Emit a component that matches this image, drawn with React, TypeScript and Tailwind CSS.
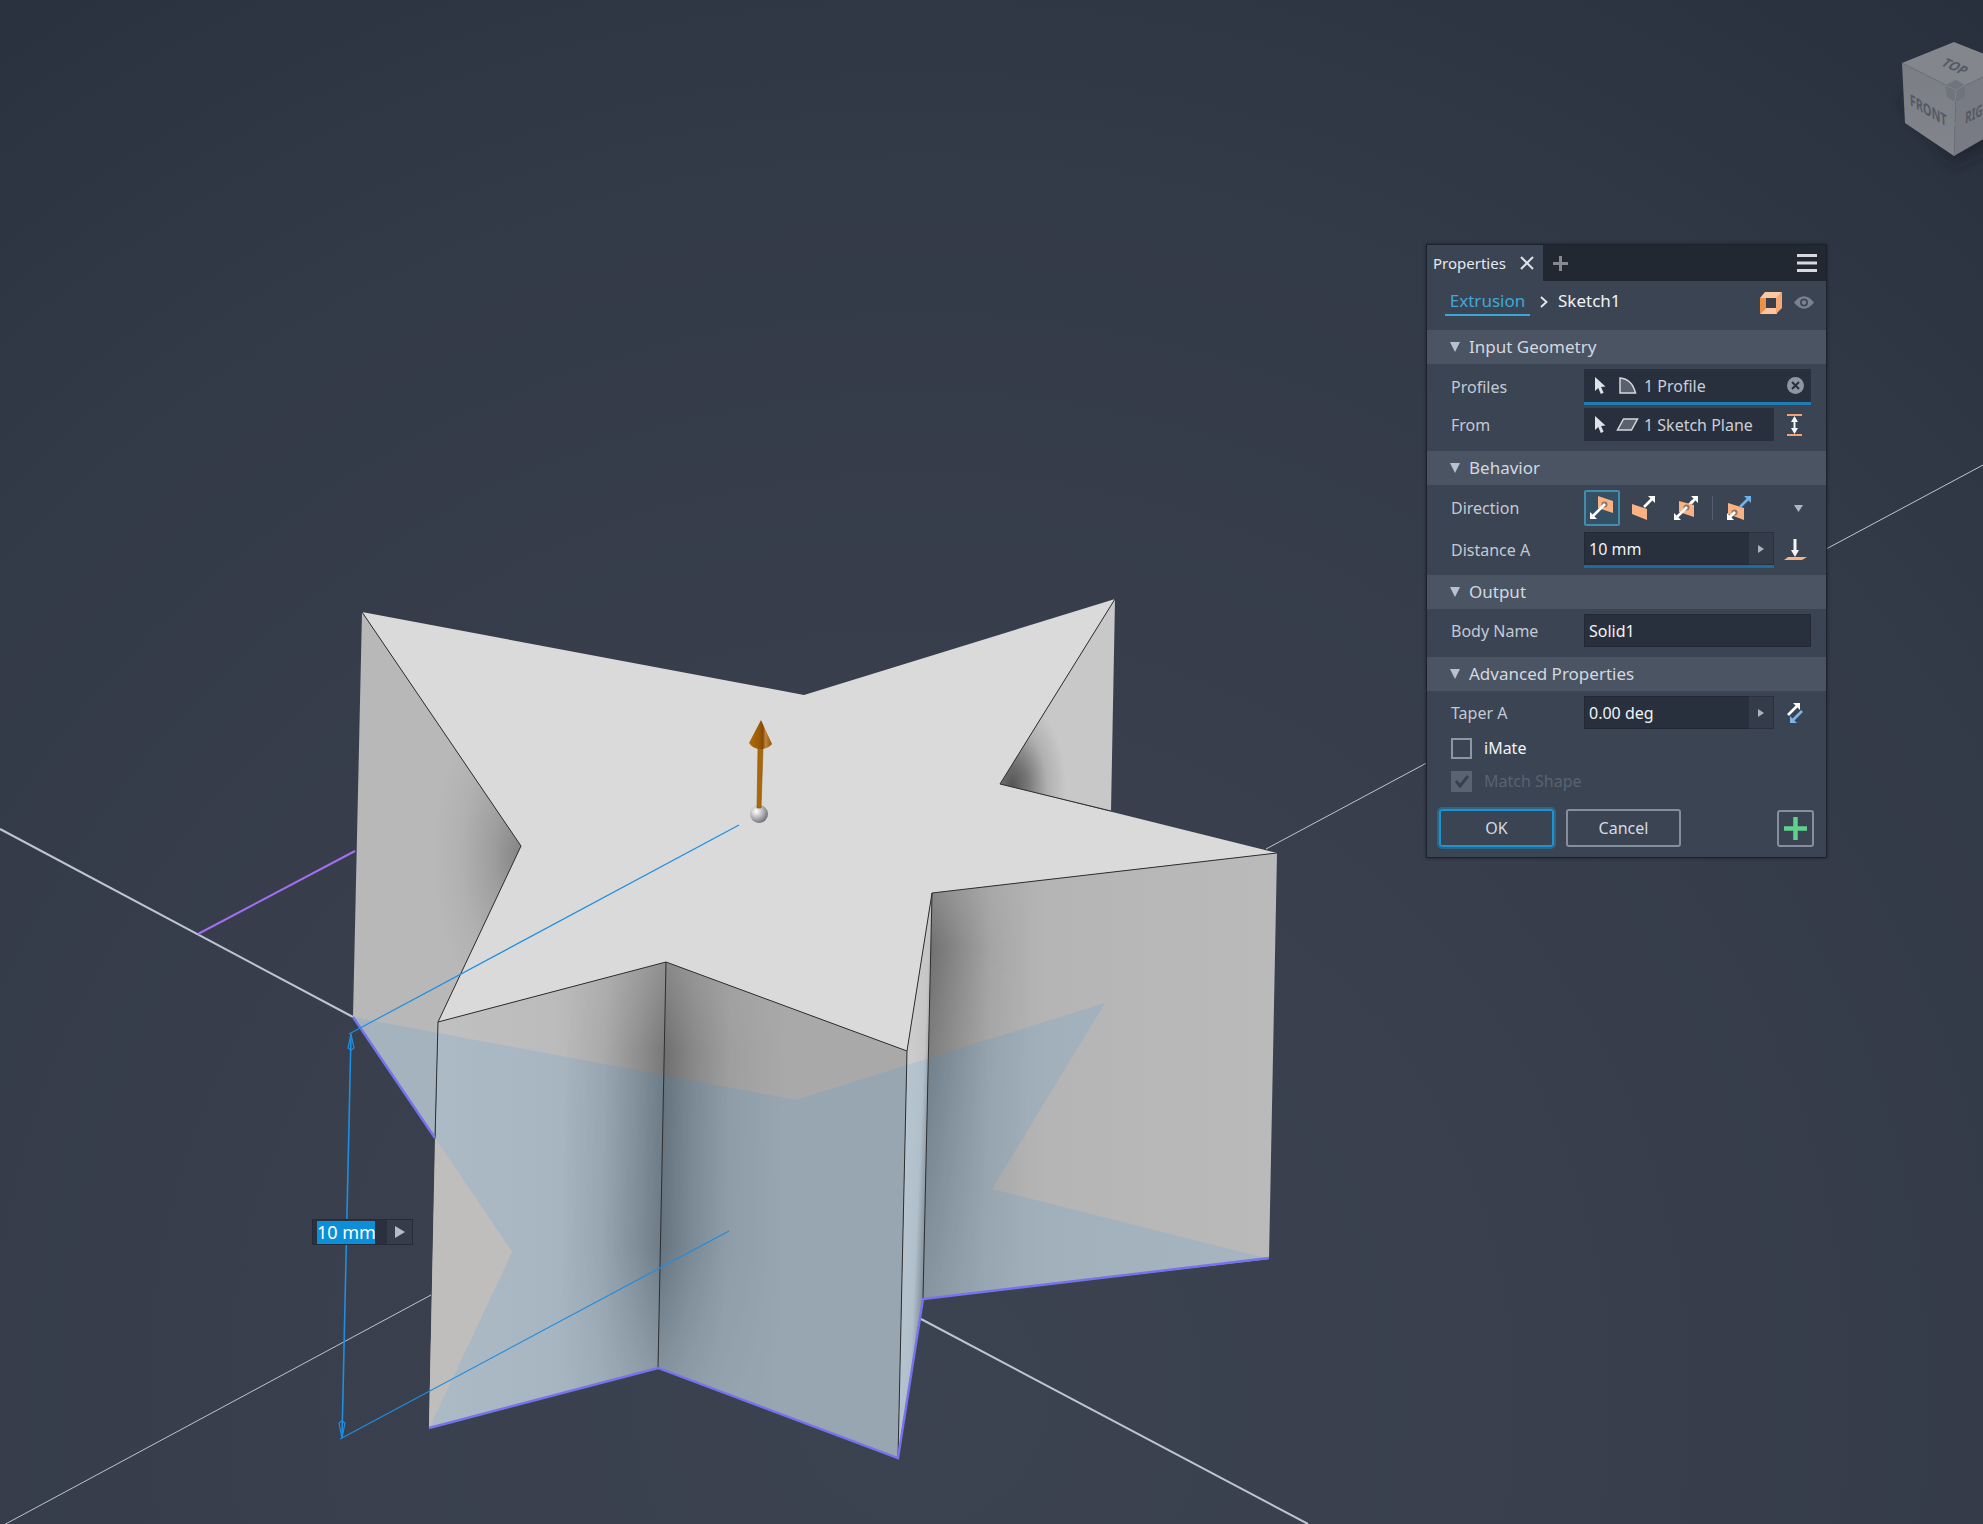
import React, { useState } from "react";

const cursorPath = "M1 0 L1 14 L4.3 11 L6.8 17 L9.6 15.8 L7.1 10 L11.5 9.6 Z";

function Scene() {
  return (
    <svg
      className="absolute inset-0 h-full w-full"
      viewBox="0 0 1983 1524"
      preserveAspectRatio="xMinYMin slice"
      aria-label="Extruded star preview"
    >
      <defs>
        <radialGradient id="bg" gradientUnits="userSpaceOnUse" cx="920" cy="1400" r="1800">
          <stop offset="0" stopColor="#3c4350" />
          <stop offset="0.35" stopColor="#393f4c" />
          <stop offset="0.7" stopColor="#333a47" />
          <stop offset="1" stopColor="#272e3c" />
        </radialGradient>
        <linearGradient id="faceIH" gradientUnits="userSpaceOnUse" x1="433" x2="664" y1="0" y2="0">
          <stop offset="0" stopColor="#c0c0c0" />
          <stop offset="0.5" stopColor="#bcbcbc" />
          <stop offset="1" stopColor="#adadad" />
        </linearGradient>
        <linearGradient id="faceFE" gradientUnits="userSpaceOnUse" x1="928" x2="1275" y1="0" y2="0">
          <stop offset="0" stopColor="#a6a6a6" />
          <stop offset="0.35" stopColor="#b5b5b5" />
          <stop offset="1" stopColor="#bababa" />
        </linearGradient>
        <linearGradient id="faceGF" gradientUnits="userSpaceOnUse" x1="904" y1="1200" x2="927" y2="1201">
          <stop offset="0" stopColor="#cccccc" />
          <stop offset="0.6" stopColor="#c6c6c6" />
          <stop offset="1" stopColor="#8c8c8c" />
        </linearGradient>
        <linearGradient id="shadeIH" gradientUnits="userSpaceOnUse" x1="662" y1="1165" x2="562" y2="1163">
          <stop offset="0" stopColor="#000" stopOpacity="0.3" />
          <stop offset="0.25" stopColor="#000" stopOpacity="0.19" />
          <stop offset="0.6" stopColor="#000" stopOpacity="0.06" />
          <stop offset="1" stopColor="#000" stopOpacity="0" />
        </linearGradient>
        <linearGradient id="shadeHG" gradientUnits="userSpaceOnUse" x1="662" y1="1165" x2="782" y2="1167">
          <stop offset="0" stopColor="#000" stopOpacity="0.34" />
          <stop offset="0.25" stopColor="#000" stopOpacity="0.19" />
          <stop offset="0.55" stopColor="#000" stopOpacity="0.06" />
          <stop offset="1" stopColor="#000" stopOpacity="0" />
        </linearGradient>
        <linearGradient id="shadeFE" gradientUnits="userSpaceOnUse" x1="928" y1="1096" x2="1028" y2="1098">
          <stop offset="0" stopColor="#000" stopOpacity="0.32" />
          <stop offset="0.3" stopColor="#000" stopOpacity="0.18" />
          <stop offset="0.6" stopColor="#000" stopOpacity="0.05" />
          <stop offset="1" stopColor="#000" stopOpacity="0" />
        </linearGradient>
        <linearGradient id="fadeFront" gradientUnits="userSpaceOnUse" x1="0" x2="0" y1="962" y2="1400">
          <stop offset="0" stopColor="#fff" stopOpacity="0.55" />
          <stop offset="0.2" stopColor="#fff" stopOpacity="1" />
          <stop offset="0.65" stopColor="#fff" stopOpacity="1" />
          <stop offset="1" stopColor="#fff" stopOpacity="0.25" />
        </linearGradient>
        <linearGradient id="fadeRight" gradientUnits="userSpaceOnUse" x1="0" x2="0" y1="885" y2="1300">
          <stop offset="0" stopColor="#fff" stopOpacity="0.5" />
          <stop offset="0.15" stopColor="#fff" stopOpacity="1" />
          <stop offset="0.35" stopColor="#fff" stopOpacity="0.8" />
          <stop offset="1" stopColor="#fff" stopOpacity="0.3" />
        </linearGradient>
        <mask id="mFront" maskUnits="userSpaceOnUse" x="400" y="900" width="600" height="600">
          <rect x="400" y="900" width="600" height="600" fill="url(#fadeFront)" />
        </mask>
        <mask id="mRight" maskUnits="userSpaceOnUse" x="900" y="800" width="400" height="600">
          <rect x="900" y="800" width="400" height="600" fill="url(#fadeRight)" />
        </mask>
        <radialGradient id="softShade">
          <stop offset="0" stopColor="#000" stopOpacity="0.3" />
          <stop offset="0.35" stopColor="#000" stopOpacity="0.14" />
          <stop offset="0.7" stopColor="#000" stopOpacity="0.04" />
          <stop offset="1" stopColor="#000" stopOpacity="0" />
        </radialGradient>
        <radialGradient id="deepShade">
          <stop offset="0" stopColor="#000" stopOpacity="0.58" />
          <stop offset="0.3" stopColor="#000" stopOpacity="0.4" />
          <stop offset="0.65" stopColor="#000" stopOpacity="0.12" />
          <stop offset="1" stopColor="#000" stopOpacity="0" />
        </radialGradient>
        <linearGradient id="cone" x1="0" x2="1" y1="0" y2="0">
          <stop offset="0" stopColor="#b06c0c" />
          <stop offset="0.45" stopColor="#9a5a04" />
          <stop offset="0.6" stopColor="#84490a" />
          <stop offset="0.72" stopColor="#c28436" />
          <stop offset="1" stopColor="#8f5203" />
        </linearGradient>
        <radialGradient id="ball" cx="0.35" cy="0.35" r="0.7">
          <stop offset="0" stopColor="#ffffff" />
          <stop offset="0.45" stopColor="#c2c2c6" />
          <stop offset="1" stopColor="#6e6e74" />
        </radialGradient>
        <clipPath id="cDC"><path d="M1000 784 L1115 599 L1111 811 Z" /></clipPath>
        <clipPath id="cAJ"><path d="M362 612 L521 846 L438 1022 L435 1138 L353 1017 Z" /></clipPath>
      </defs>

      <rect width="1983" height="1524" fill="url(#bg)" />

      <g stroke="#bdc4d2" fill="none">
        <path d="M0 829 L353 1017 M921 1319 L1308 1524" strokeWidth="2" />
        <path d="M0 1527 L431 1295 M1266 849 L1983 465" strokeWidth="1" />
      </g>
      <path d="M198 934 L355 851" stroke="#a36ff2" strokeWidth="2" />

      <path d="M362 612 L521 846 L438 1022 L435 1138 L353 1017 Z" fill="#b8b8b8" />
      <ellipse cx="524" cy="856" rx="90" ry="170" fill="url(#softShade)" clipPath="url(#cAJ)" />
      <path d="M1000 784 L1115 599 L1111 811 Z" fill="#c8c8c8" />
      <ellipse cx="1012" cy="786" rx="54" ry="90" fill="url(#deepShade)" clipPath="url(#cDC)" />
      <path d="M932 893 L1277 853 L1269 1259 L923 1299 Z" fill="url(#faceFE)" />
      <path d="M932 893 L1277 853 L1269 1259 L923 1299 Z" fill="url(#shadeFE)" mask="url(#mRight)" />
      <path d="M932 893 L923 1299 L898 1458 L907 1051 Z" fill="url(#faceGF)" />
      <path d="M438 1022 L666 962 L658 1368 L429 1428 Z" fill="url(#faceIH)" />
      <path d="M438 1022 L666 962 L658 1368 L429 1428 Z" fill="url(#shadeIH)" mask="url(#mFront)" />
      <path d="M666 962 L907 1051 L898 1458 L658 1368 Z" fill="#a9a9a9" />
      <path d="M666 962 L907 1051 L898 1458 L658 1368 Z" fill="url(#shadeHG)" mask="url(#mFront)" />

      <path
        d="M353 1017 L796 1100 L1105 1003 L992 1189 L1269 1259 L923 1299 L898 1458 L658 1368 L429 1428 L512 1252 Z"
        fill="#2396e9"
        fillOpacity="0.13"
      />
      <path d="M435 1138 L512 1252 L429 1428 Z" fill="#c0bebc" />

      <path
        d="M362 612 L804 695 L1115 599 L1000 784 L1277 853 L932 893 L907 1051 L666 962 L438 1022 L521 846 Z"
        fill="#dadada"
      />
      <g stroke="#2e2f31" strokeWidth="1" fill="none">
        <path d="M362 612 L521 846 L438 1022 L666 962 L907 1051 L932 893 L1277 853" />
        <path d="M1115 599 L1000 784 L1111 811" />
        <path d="M438 1022 L435 1138 M666 962 L658 1368 M907 1051 L898 1458 M932 893 L923 1299" />
      </g>
      <g stroke="#7672f0" strokeWidth="2.4" fill="none">
        <path d="M353 1017 L435 1138" />
        <path d="M429 1428 L658 1368 L898 1458 L923 1299 L1269 1258" />
      </g>

      <g stroke="#1e8ee2" strokeWidth="1.2" fill="none">
        <path d="M349 1034 L739 825" />
        <path d="M340 1439 L729 1231" />
        <path d="M351 1034 L342 1438" strokeWidth="1.6" />
        <path d="M351 1034 L348 1048 L351 1050 L354 1048 Z" />
        <path d="M342 1438 L339 1423 L342 1421 L345 1423 Z" />
      </g>

      <circle cx="759" cy="814" r="9" fill="url(#ball)" />
      <path d="M757 808 L758 748 L763 748 L761 808 Z" fill="#a8690c" stroke="#8a5204" strokeWidth="0.6" />
      <path d="M761 720 L772 744 Q768 749 761 749 Q753 749 749 743 Z" fill="url(#cone)" />
    </svg>
  );
}

function ViewCube() {
  return (
    <svg className="absolute top-0 right-0" width="113" height="180" viewBox="1870 0 113 180" aria-label="View cube">
      <defs>
        <linearGradient id="cubeFront" x1="0" x2="0" y1="0" y2="1">
          <stop offset="0" stopColor="#7b7e86" />
          <stop offset="1" stopColor="#82858c" />
        </linearGradient>
        <filter id="cubeShadow" x="-30%" y="-30%" width="160%" height="160%">
          <feGaussianBlur stdDeviation="7" />
        </filter>
      </defs>
      <path d="M1902 100 L1954 164 L2000 140 L2000 90 Z" fill="#1b202b" opacity="0.7" filter="url(#cubeShadow)" />
      <path d="M1954 42 L2010 64 L1956 90 L1902 63 Z" fill="#83868d" />
      <path d="M1902 63 L1956 90 L1954 156 L1905 123 Z" fill="url(#cubeFront)" />
      <path d="M1956 90 L2010 64 L2006 126 L1954 156 Z" fill="#787b83" />
      <path d="M1902 63 L1956 90 L2010 64 M1956 90 L1954 156" stroke="#6e727a" strokeWidth="1" fill="none" strokeDasharray="5 2" />
      <path d="M1945 85 L1956 80 L1965 85 L1965 97 L1955 102 L1947 97 Z" fill="#70747c" />
      <path d="M1945 85 L1956 90 L1965 85 M1956 90 L1955 102" stroke="#7f838b" strokeWidth="1" fill="none" />
      <g fill="#555963" fontFamily="'Noto Sans', sans-serif" fontWeight="700">
        <text transform="matrix(0.72 0.32 -0.62 0.62 1940 65)" fontSize="16">TOP</text>
        <text transform="matrix(0.68 0.4 0.03 1 1910 105)" fontSize="16">FRONT</text>
        <text transform="matrix(0.62 -0.32 -0.03 1 1965 124)" fontSize="16">RIG</text>
      </g>
    </svg>
  );
}

function Cursor() {
  return (
    <svg width="12" height="18" viewBox="0 0 12 18" className="shrink-0">
      <path d={cursorPath} fill="#dde2e8" />
    </svg>
  );
}

function Section({ title, children }: { title: string; children: React.ReactNode }) {
  return (
    <section>
      <h2>
        <button type="button" className="flex h-[34px] w-full items-center gap-[9px] bg-[#4b5462] pl-[23px] text-left text-[17px] text-[#d3d8e0]">
          <svg width="10" height="10" viewBox="0 0 10 10"><path d="M0 0 H10 L5 10 Z" fill="#b7c1d1" /></svg>
          {title}
        </button>
      </h2>
      {children}
    </section>
  );
}

function Row({ label, htmlFor, children }: { label: string; htmlFor?: string; children: React.ReactNode }) {
  return (
    <div className="flex items-center">
      <label htmlFor={htmlFor} className="w-[133px] shrink-0 text-[#c3c9d4]">{label}</label>
      {children}
    </div>
  );
}

function Arrow({ x1, y1, x2, y2, color }: { x1: number; y1: number; x2: number; y2: number; color: string }) {
  const sx = Math.sign(x2 - x1);
  const sy = Math.sign(y2 - y1);
  return (
    <g>
      <path d={`M${x1} ${y1} L${x2 - 2 * sx} ${y2 - 2 * sy}`} stroke={color} strokeWidth="2.6" />
      <path d={`M${x2} ${y2} L${x2 - 7 * sx} ${y2} L${x2} ${y2 - 7 * sy} Z`} fill={color} />
    </g>
  );
}

const plane = "#f8b284";
const pierce = "#8f7468";

function ValueField({ id, value, active }: { id: string; value: string; active?: boolean }) {
  const [v, setV] = useState(value);
  return (
    <div className={active ? "flex h-[36px] w-[190px] border-b-[3px] border-[#1f6c9c] bg-[#29303d]" : "flex h-[33px] w-[190px] bg-[#29303d]"}>
      <input id={id} value={v} onChange={(e) => setV(e.target.value)} className="w-[165px] border border-r-0 border-[#222935] bg-transparent pl-1 text-[#f1f3f6] outline-none" />
      <button type="button" aria-label="More options" className="flex w-[25px] items-center justify-center border border-l-0 border-[#2a313e] bg-[#353c49]">
        <svg width="6" height="8" viewBox="0 0 6 8"><path d="M0 0 L6 4 L0 8 Z" fill="#a9b2c1" /></svg>
      </button>
    </div>
  );
}

function PropertiesPanel() {
  const [imate, setImate] = useState(false);
  const [body, setBody] = useState("Solid1");
  return (
    <form
      onSubmit={(e) => e.preventDefault()}
      className="absolute top-[244px] right-[156px] w-[401px] border border-[#1c222c] bg-[#3b4453] text-[16px] leading-[22px] shadow-[0_0_3px_#1c222c]"
    >
      <header className="flex h-[36px] items-stretch bg-[#222832]">
        <div className="flex w-[116px] items-center gap-[14px] bg-[#3b4453] pl-[6px] text-[15px] text-[#e6e9ee]">
          <span>Properties</span>
          <button type="button" aria-label="Close tab">
            <svg width="14" height="14" viewBox="0 0 14 14"><path d="M1 1 L13 13 M13 1 L1 13" stroke="#dfe2e7" strokeWidth="2" /></svg>
          </button>
        </div>
        <button type="button" aria-label="Add tab" className="ml-[10px]">
          <svg width="15" height="15" viewBox="0 0 15 15"><path d="M7.5 0 V15 M0 7.5 H15" stroke="#868a90" strokeWidth="3" /></svg>
        </button>
        <button type="button" aria-label="Menu" className="mr-[9px] ml-auto">
          <svg width="20" height="18" viewBox="0 0 20 18"><path d="M0 1.5 H20 M0 9 H20 M0 16.5 H20" stroke="#d6dae0" strokeWidth="3" /></svg>
        </button>
      </header>

      <nav className="flex h-[49px] items-start pt-[9px] pl-[18px] text-[17px]" aria-label="Feature path">
        <a href="#extrusion" className="w-[85px] border-b-2 border-[#3aa7da] pb-[2px] text-center text-[#3fa8d8]">Extrusion</a>
        <svg className="mt-[6px] ml-[10px]" width="8" height="12" viewBox="0 0 8 12"><path d="M1 1 L6.500 6 L1 11" stroke="#e8eaee" strokeWidth="1.800" fill="none" /></svg>
        <a href="#sketch1" className="ml-[10px] text-[#f1f3f6]">Sketch1</a>
        <button type="button" aria-label="Solid output" className="mt-[2px] ml-auto">
          <svg width="22" height="22" viewBox="0 0 22 22">
            <path d="M0 6 L5 0 H22 L17 6 Z" fill="#fcc9a3" />
            <path d="M0 6 H6 V16 L0 22 Z" fill="#ee9148" />
            <path d="M0 22 L6 16 H17 V22 Z" fill="#fdc59b" />
            <path d="M16 6 L22 0 V16 L16 22 Z" fill="#f6a873" />
            <path d="M6 6 H16 V16 H6 Z" fill="#3b3f4a" />
          </svg>
        </button>
        <button type="button" aria-label="Toggle visibility" className="mt-[6px] mr-[12px] ml-[12px]">
          <svg width="20" height="13" viewBox="0 0 20 13">
            <path d="M0 6.500 Q10 -6 20 6.500 Q10 19 0 6.500 Z" fill="#7b8290" />
            <circle cx="10" cy="6.500" r="4" fill="#3f4755" />
            <circle cx="10" cy="6.500" r="2.200" fill="#7b8290" />
          </svg>
        </button>
      </nav>

      <Section title="Input Geometry">
        <div className="flex h-[87px] flex-col gap-[3px] pt-[5px] pl-[24px]">
          <Row label="Profiles">
            <div className="flex h-[36px] w-[227px] items-center border-b-[3px] border-[#1f7db3] bg-[#29303d] pr-[7px] pl-[10px] text-[#c9ced7]">
              <Cursor />
              <svg className="ml-[13px]" width="18" height="17" viewBox="0 0 18 17"><path d="M1 1 Q13 2 16.500 16 H1 Z" fill="#5a606c" stroke="#d3d7de" strokeWidth="1.500" /></svg>
              <span className="ml-[7px]">1 Profile</span>
              <button type="button" aria-label="Clear profiles" className="ml-auto">
                <svg width="17" height="17" viewBox="0 0 17 17"><circle cx="8.500" cy="8.500" r="8.500" fill="#8e96a4" /><path d="M5 5 L12 12 M12 5 L5 12" stroke="#29303d" strokeWidth="2" /></svg>
              </button>
            </div>
          </Row>
          <Row label="From">
            <div className="flex h-[33px] w-[190px] items-center bg-[#29303d] pl-[10px] text-[#c9ced7]">
              <Cursor />
              <svg className="ml-[10px]" width="23" height="13" viewBox="0 0 23 13"><path d="M7.500 1 H21.500 L15.500 12 H1.500 Z" fill="#5a606c" stroke="#d3d7de" strokeWidth="1.500" /></svg>
              <span className="ml-[5px] whitespace-nowrap">1 Sketch Plane</span>
            </div>
            <button type="button" aria-label="Between" className="ml-[13px]">
              <svg width="15" height="22" viewBox="0 0 15 22">
                <path d="M0 1 H15 M0 21 H15" stroke="#f0a377" strokeWidth="2" />
                <path d="M7.500 4 V18" stroke="#f4f5f7" strokeWidth="2" />
                <path d="M7.500 2 L11 8 H4 Z M7.500 20 L11 14 H4 Z" fill="#f4f5f7" />
              </svg>
            </button>
          </Row>
        </div>
      </Section>

      <Section title="Behavior">
        <div className="flex h-[90px] flex-col gap-[6px] pt-[5px] pl-[24px]">
          <Row label="Direction">
            <button type="button" aria-label="Default direction" className="flex h-[36px] w-[36px] items-center justify-center rounded-[2px] border-2 border-[#448cae] bg-[#345064]">
              <svg width="24" height="24" viewBox="0 0 24 24"><path d="M8 0 L23 5 V17 L8 12 Z" fill={plane} /><circle cx="14.500" cy="8.500" r="3" fill={pierce} /><Arrow x1={15} y1={8} x2={0} y2={23} color="#fff" /></svg>
            </button>
            <button type="button" aria-label="Flipped direction" className="ml-[12px]">
              <svg width="24" height="24" viewBox="0 0 24 24"><path d="M0 8 L15 13 V24 L0 18 Z" fill={plane} /><Arrow x1={12} y1={11} x2={23} y2={0} color="#fff" /></svg>
            </button>
            <button type="button" aria-label="Symmetric direction" className="ml-[18px]">
              <svg width="24" height="24" viewBox="0 0 24 24"><Arrow x1={15} y1={9} x2={24} y2={0} color="#fff" /><path d="M5 5 L20 9 V21 L5 16 Z" fill={plane} /><circle cx="12.500" cy="11.500" r="3" fill={pierce} /><path d="M17 7 L19 5" stroke="#fff" strokeWidth="2.600" /><Arrow x1={13} y1={11} x2={0} y2={24} color="#fff" /></svg>
            </button>
            <span className="ml-[14px] h-[24px] w-px bg-[#535d6c]" />
            <button type="button" aria-label="Asymmetric direction" className="ml-[14px]">
              <svg width="24" height="24" viewBox="0 0 24 24"><path d="M1 7 L17 12 V24 L1 18 Z" fill={plane} /><circle cx="7.500" cy="16.500" r="3" fill={pierce} /><Arrow x1={13} y1={11} x2={24} y2={0} color="#6db2ee" /><Arrow x1={8} y1={16} x2={0} y2={24} color="#fff" /></svg>
            </button>
            <button type="button" aria-label="More directions" className="ml-[43px]">
              <svg width="9" height="7" viewBox="0 0 9 7"><path d="M0 0 H9 L4.500 7 Z" fill="#aeb7c5" /></svg>
            </button>
          </Row>
          <Row label="Distance A" htmlFor="distance">
            <ValueField id="distance" value="10 mm" active />
            <button type="button" aria-label="Extents" className="ml-[10px]">
              <svg width="23" height="22" viewBox="0 0 23 22">
                <path d="M4 18 H23 L18 21 H0 Z" fill={plane} />
                <path d="M11 0 V12" stroke="#f4f5f7" strokeWidth="3" />
                <path d="M7 11 H15 L11 18 Z" fill="#f4f5f7" />
              </svg>
            </button>
          </Row>
        </div>
      </Section>

      <Section title="Output">
        <div className="h-[48px] pt-[5px] pl-[24px]">
          <Row label="Body Name" htmlFor="body">
            <input id="body" value={body} onChange={(e) => setBody(e.target.value)} className="h-[33px] w-[227px] border border-[#222935] bg-[#29303d] pl-1 text-[#f1f3f6] outline-none" />
          </Row>
        </div>
      </Section>

      <Section title="Advanced Properties">
        <div className="pt-[5px] pl-[24px]">
          <Row label="Taper A" htmlFor="taper">
            <ValueField id="taper" value="0.00 deg" />
            <button type="button" aria-label="Flip taper" className="ml-[13px]">
              <svg width="16" height="22" viewBox="0 0 16 22"><Arrow x1={1} y1={13} x2={13} y2={1} color="#fff" /><Arrow x1={15} y1={9} x2={3} y2={21} color="#79b4ea" /></svg>
            </button>
          </Row>
          <label className="mt-[8px] flex items-center gap-[12px] text-[#f1f3f6]">
            <input type="checkbox" checked={imate} onChange={(e) => setImate(e.target.checked)} className="h-[21px] w-[21px] appearance-none border-2 border-[#8d96a5] bg-transparent" />
            iMate
          </label>
          <label className="mt-[11px] flex items-center gap-[12px] text-[#596271]">
            <span className="relative h-[21px] w-[21px]">
              <input type="checkbox" checked disabled readOnly className="block h-[21px] w-[21px] appearance-none bg-[#5a6372]" />
              <svg className="absolute inset-0" width="21" height="21" viewBox="0 0 21 21"><path d="M5 10 L9 15 L17 5" stroke="#39414f" strokeWidth="3" fill="none" /></svg>
            </span>
            Match Shape
          </label>
        </div>
      </Section>

      <footer className="mt-[15px] mb-[8px] flex items-center pr-[12px] pl-[10px]">
        <button type="submit" className="h-[42px] w-[119px] rounded-[5px] border-2 border-[#2b6687] text-[#d6dae2] shadow-[inset_0_0_0_2px_#1f93cf]">OK</button>
        <button type="button" className="ml-[10px] h-[38px] w-[115px] rounded-[3px] border-2 border-[#858e9d] text-[#d6dae2]">Cancel</button>
        <button type="button" aria-label="Apply and create new" className="ml-auto flex h-[37px] w-[37px] items-center justify-center rounded-[3px] border-2 border-[#858e9d]">
          <svg width="23" height="23" viewBox="0 0 23 23"><path d="M11.500 0 V23 M0 11.500 H23" stroke="#5fd18c" strokeWidth="4.500" /></svg>
        </button>
      </footer>
    </form>
  );
}

function DimensionInput() {
  const [value, setValue] = useState("10 mm");
  return (
    <div className="absolute top-[1219px] left-[312px] flex h-[26px] w-[101px] items-stretch justify-between border border-[#262c37] bg-[#2a303d] font-['Noto_Sans',sans-serif]">
      <input
        aria-label="Distance"
        value={value}
        onChange={(e) => setValue(e.target.value)}
        className="mt-px ml-[4px] w-[58px] bg-[#0c8fd8] text-[18px] text-white outline-none"
      />
      <button type="button" aria-label="Distance options" className="flex w-[25px] items-center justify-center bg-[#363d4a]">
        <svg width="10" height="12" viewBox="0 0 10 12"><path d="M0 0 L10 6 L0 12 Z" fill="#b4bccb" /></svg>
      </button>
    </div>
  );
}

export default function App() {
  return (
    <main className="relative min-h-screen w-full overflow-hidden bg-[#363d4a] font-['Noto_Sans',sans-serif]">
      <Scene />
      <ViewCube />
      <DimensionInput />
      <PropertiesPanel />
    </main>
  );
}
